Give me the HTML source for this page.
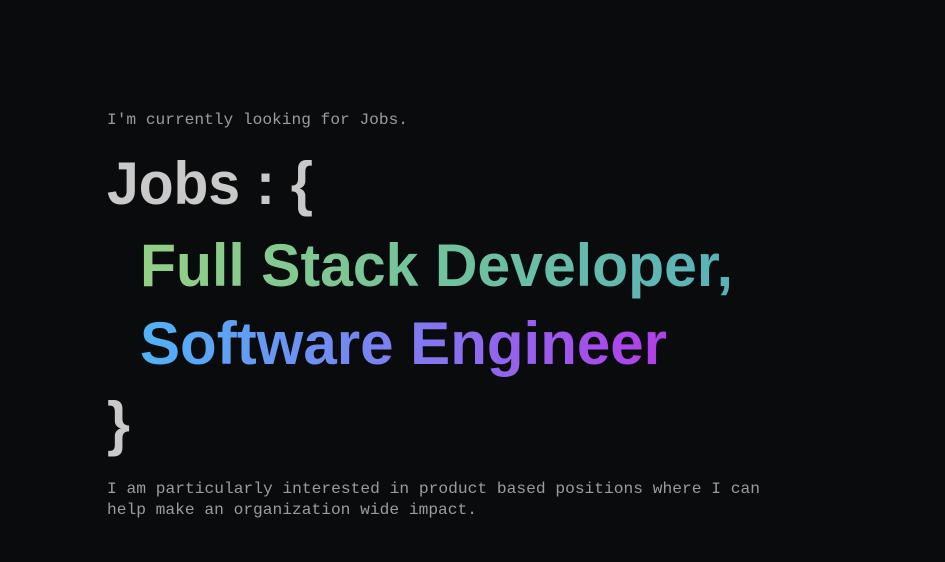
<!DOCTYPE html>
<html><head><meta charset="utf-8"><style>
html,body{margin:0;padding:0;background:#0a0b0d;width:945px;height:562px;overflow:hidden}
</style></head><body>
<svg width="945" height="562" xmlns="http://www.w3.org/2000/svg">
<defs>
<linearGradient id="g1" gradientUnits="userSpaceOnUse" x1="140" y1="0" x2="733" y2="0">
<stop offset="0" stop-color="#93d086"/><stop offset="0.5" stop-color="#72c29c"/><stop offset="1" stop-color="#58b2bb"/></linearGradient>
<linearGradient id="g2" gradientUnits="userSpaceOnUse" x1="140" y1="0" x2="667" y2="0">
<stop offset="0" stop-color="#4fb3f7"/><stop offset="0.5" stop-color="#7f7cf0"/><stop offset="1" stop-color="#b23ee9"/></linearGradient>
</defs>
<g font-family="Liberation Mono, monospace" font-size="16" fill="#9b9b9b">
<text x="107" y="124" textLength="301" lengthAdjust="spacingAndGlyphs">I'm currently looking for Jobs.</text>
<text x="107" y="493" textLength="653" lengthAdjust="spacingAndGlyphs">I am particularly interested in product based positions where I can</text>
<text x="107" y="514" textLength="370" lengthAdjust="spacingAndGlyphs">help make an organization wide impact.</text>
</g>
<g font-family="Liberation Sans, sans-serif" font-weight="bold" font-size="60">
<text x="107" y="204" fill="#c9c9c9" textLength="206" lengthAdjust="spacingAndGlyphs">Jobs : {</text>
<text x="140" y="286" fill="url(#g1)" textLength="593" lengthAdjust="spacingAndGlyphs">Full Stack Developer,</text>
<text x="140" y="364" fill="url(#g2)" textLength="527" lengthAdjust="spacingAndGlyphs">Software Engineer</text>
<text x="107" y="444" fill="#c9c9c9" textLength="23" lengthAdjust="spacingAndGlyphs">}</text>
</g>
</svg>
</body></html>
